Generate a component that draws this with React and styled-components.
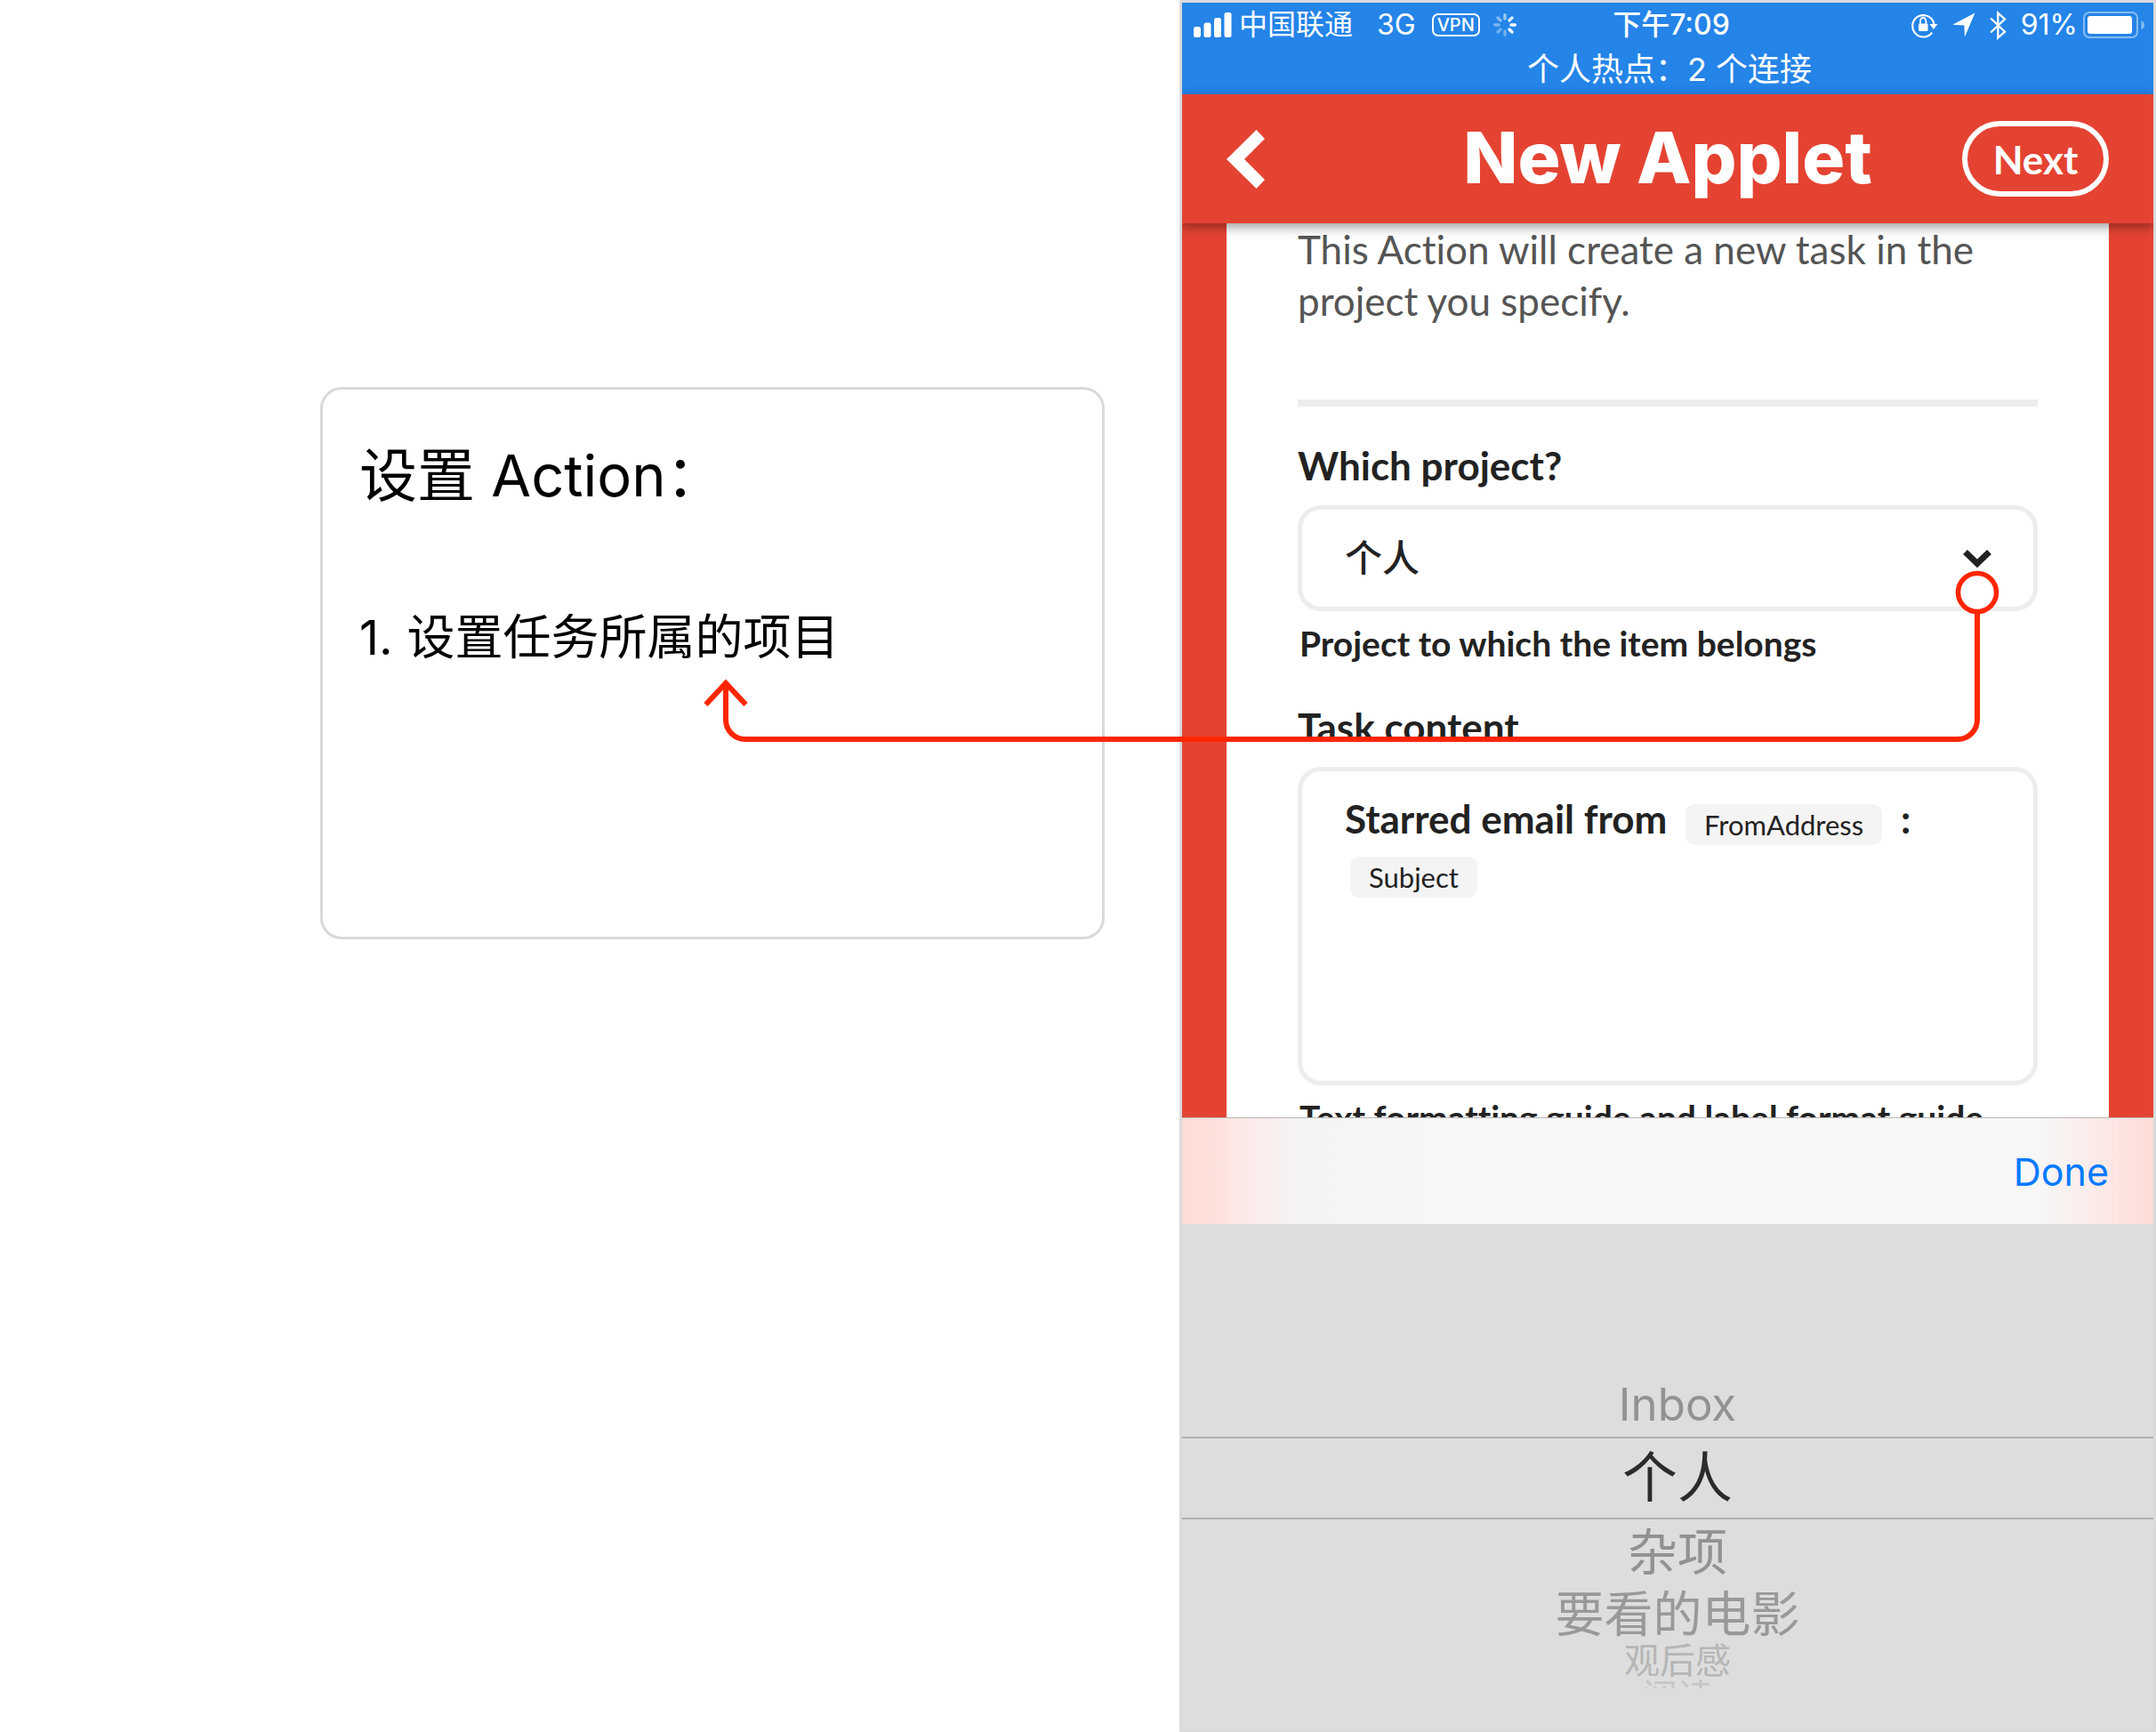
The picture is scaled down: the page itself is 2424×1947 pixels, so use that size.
import React, { useState } from "react";
import styled, { createGlobalStyle } from "styled-components";

const UI = `Inter, "Noto Sans CJK SC", sans-serif`;
const BRAND = `Lato, "Noto Sans CJK SC", sans-serif`;

const GlobalStyle = createGlobalStyle`
  *, *::before, *::after { box-sizing: border-box; }
  body { margin: 0; background: #fff; font-family: ${UI}; }
  h1, h2, p, ol, ul { margin: 0; padding: 0; }
  button, select { font: inherit; color: inherit; border: 0; background: none; padding: 0; margin: 0; }
`;

const Page = styled.main`
  position: relative;
  display: grid;
  grid-template-columns: minmax(0, 1326fr) minmax(0, 1098fr);
  min-height: 100vh;
  overflow: hidden;
`;

const NoteColumn = styled.section`
  display: flex;
  flex-direction: column;
  padding: 435px 84px 0 360px;
`;

const NoteCard = styled.article`
  min-height: 621px;
  padding: 52px 41px;
  border: 3px solid #d9d9d9;
  border-radius: 24px;
  color: #000;
`;

const NoteTitle = styled.h2`
  font-size: 65px;
  line-height: 90px;
  font-weight: 400;
`;

const NoteList = styled.ol`
  margin-top: 99px;
  list-style: none;
  font-size: 54px;
  line-height: 76px;
`;

const NoteItem = styled.li`
  display: flex;
  gap: 16px;
`;

const Phone = styled.section`
  display: flex;
  flex-direction: column;
  overflow: hidden;
  border: 3px solid #d9d9d9;
`;

const StatusBar = styled.div`
  padding: 0 9px 3px 13px;
  background: #2484e8;
  color: #fff;
`;

const StatusRow = styled.div`
  display: grid;
  grid-template-columns: 1fr auto 1fr;
  align-items: center;
  height: 50px;
  font-size: 32px;
  line-height: 50px;
`;

const StatusGroup = styled.div`
  display: flex;
  align-items: center;
  justify-content: ${(p) => (p.$end ? "flex-end" : "flex-start")};
  gap: ${(p) => p.$gap}px;
  white-space: nowrap;
`;

const Time = styled.span`
  padding-left: 4px;
  font-weight: 500;
`;

const VpnBadge = styled.span`
  padding: 0 4px;
  border: 2px solid #fff;
  border-radius: 7px;
  font-size: 20px;
  line-height: 22px;
  font-weight: 500;
`;

const Hotspot = styled.p`
  font-size: 36px;
  line-height: 50px;
  text-align: center;
`;

const Header = styled.header`
  position: relative;
  z-index: 1;
  display: grid;
  grid-template-columns: 165px 1fr 165px;
  align-items: center;
  height: 145px;
  padding: 0 50px;
  background: #e44332;
  color: #fff;
  font-family: ${BRAND};
  box-shadow: 0 4px 12px rgba(0, 0, 0, 0.4);
`;

const BackButton = styled.button`
  display: flex;
  justify-self: start;
`;

const Title = styled.h1`
  padding-bottom: 4px;
  font-family: ${UI};
  font-size: 80px;
  line-height: 94px;
  font-weight: 800;
  text-align: center;
  white-space: nowrap;
`;

const NextButton = styled.button`
  height: 85px;
  border: 6px solid #fff;
  border-radius: 43px;
  font-size: 44px;
  font-weight: 700;
`;

const Backdrop = styled.div`
  height: 1005px;
  padding: 0 50px;
  overflow: hidden;
  background: #e44332;
`;

const Form = styled.form`
  padding: 0 80px;
  background: #fff;
  color: #222;
  font-family: ${BRAND};
  font-size: 44px;
  line-height: 58px;
  font-variant-ligatures: none;
`;

const Intro = styled.p`
  padding-bottom: 82px;
  border-bottom: 8px solid #ededed;
  color: #555;
`;

const Field = styled.div`
  padding-top: ${(p) => p.$top}px;
`;

const Label = styled.label`
  display: block;
  margin-bottom: 16px;
  font-weight: 700;
`;

const SelectBox = styled.div`
  position: relative;
  display: flex;
`;

const Select = styled.select`
  appearance: none;
  width: 100%;
  height: 119px;
  padding: 0 100px 2px 48px;
  border: 5px solid #ededed;
  border-radius: 26px;
  background: #fff;
  font-size: 42px;
  font-weight: 500;
`;

const SelectChevron = styled.svg`
  position: absolute;
  right: 51px;
  top: 49px;
  pointer-events: none;
`;

const Editor = styled.div`
  min-height: 358px;
  padding: 24px 48px;
  border: 5px solid #ededed;
  border-radius: 26px;
  font-weight: 700;
`;

const Chip = styled.span`
  display: inline-block;
  margin: 0 ${(p) => (p.$lead ? 6 : 10)}px;
  padding: 0 21px;
  border-radius: 10px;
  background: #f4f4f4;
  font-size: 31px;
  line-height: 46px;
  font-weight: 400;
  vertical-align: -2px;
`;

const Hint = styled.p`
  padding: 11px 2px 0;
  font-size: 39px;
  line-height: 50px;
  font-weight: 700;
  white-space: nowrap;
`;

const Toolbar = styled.div`
  display: flex;
  align-items: center;
  justify-content: flex-end;
  height: 120px;
  padding: 0 50px;
  border-top: 1px solid #b9b5b5;
  background: linear-gradient(90deg, #ffdbd6 0, #ffdfda 30px, #fbeceb 80px, #f4f4f4 140px, #f7f7f7 300px, #f7f7f7 calc(100% - 130px), #fbecea calc(100% - 70px), #ffdcd7 100%);
`;

const DoneButton = styled.button`
  color: #007aff;
  font-size: 43px;
  line-height: 60px;
`;

const Picker = styled.ul`
  flex: 1;
  padding: 166px 0 40px;
  background: #ddd;
  list-style: none;
`;

const PickerRow = styled.li`
  display: flex;
  justify-content: center;
  align-items: ${(p) => (p.$clipped ? "flex-start" : "center")};
  height: ${(p) => p.$height}px;
  padding-left: 22px;
  overflow: ${(p) => (p.$clipped ? "hidden" : "visible")};
  border: solid #b0b0b0;
  border-width: ${(p) => (p.$selected ? "2px 0" : 0)};
`;

const PickerButton = styled.button`
  flex: none;
  color: ${(p) => p.$color};
  font-size: ${(p) => p.$size}px;
  line-height: 1;
`;

const Connector = styled.svg`
  position: absolute;
  z-index: 2;
  top: 0;
  left: 0;
  width: 100%;
  pointer-events: none;
`;

const SignalIcon = () => (
  <svg width="43" height="28" viewBox="0 0 43 28" fill="#fff" aria-hidden="true">
    <rect x="0" y="16" width="8" height="12" rx="2.5" />
    <rect x="11.5" y="11.5" width="8" height="16.5" rx="2.5" />
    <rect x="23" y="6" width="8" height="22" rx="2.5" />
    <rect x="34.5" y="0" width="8" height="28" rx="2.5" />
  </svg>
);

const SPOKES = [0.55, 0.85, 1, 1, 0.35, 0.35, 0.4, 0.45];

const SpinnerIcon = () => (
  <svg width="26" height="28" viewBox="-13 -14 26 28" stroke="#fff" strokeWidth="3.4" strokeLinecap="round" aria-hidden="true">
    {SPOKES.map((o, i) => (
      <line key={i} y1="-7" y2="-11.3" opacity={o} transform={`rotate(${i * 45})`} />
    ))}
  </svg>
);

const RotationLockIcon = () => (
  <svg width="30" height="30" viewBox="0 0 30 30" fill="none" stroke="#fff" strokeWidth="2.2" aria-hidden="true">
    <path d="M23.2 23.6A12.2 12.2 0 1 1 25.5 14.5" />
    <path d="M20.5 14h9l-4.6 6z" fill="#fff" stroke="none" />
    <rect x="8" y="13.5" width="10.5" height="8.5" rx="1" fill="#fff" stroke="none" />
    <path d="M10 14v-3.2a3.2 3.8 0 0 1 6.4 0V14" strokeWidth="1.8" />
  </svg>
);

const LocationIcon = () => (
  <svg width="26" height="28" viewBox="0 0 26 28" fill="#fff" aria-hidden="true">
    <path d="M25.5 .6 14 27.5l-.6-13L.3 13.8z" />
  </svg>
);

const BluetoothIcon = () => (
  <svg width="19" height="33" viewBox="0 0 19 33" fill="none" stroke="#fff" strokeWidth="2.3" aria-hidden="true">
    <path d="M1.2 8.5 17 23.7 9.3 30.5V2.6L17 9.5 1.2 24.5" />
  </svg>
);

const BatteryIcon = () => (
  <svg width="70" height="30" viewBox="0 0 70 30" aria-hidden="true">
    <rect x="1" y="1" width="60" height="28" rx="6" fill="none" stroke="#fff" strokeWidth="2" opacity=".45" />
    <rect x="5" y="5" width="50" height="20" rx="3" fill="#fff" />
    <path d="M65.5 10c4.6 2 4.6 8.500 0 10.500z" fill="#fff" opacity=".45" />
  </svg>
);

const BackIcon = () => (
  <svg width="43" height="66" viewBox="0 0 43 66" fill="#fff" aria-hidden="true">
    <path d="M33.500 0 43 10 20 33 43 56 33.500 66 0 33z" />
  </svg>
);

const OPTIONS = [
  { name: "Inbox", height: 73, size: 51, color: "#929292" },
  { name: "个人", height: 93, size: 62, color: "#2b2b2b" },
  { name: "杂项", height: 74, size: 56, color: "#929292" },
  { name: "要看的电影", height: 64, size: 55, color: "#999" },
  { name: "观后感", height: 42, size: 40, color: "#b6b6b6" },
  { name: "阅读", height: 10, size: 40, color: "#c6c6c6", clipped: true },
];

export default function App() {
  const [project, setProject] = useState("个人");
  return (
    <>
      <GlobalStyle />
      <Page lang="zh-CN">
        <NoteColumn>
          <NoteCard>
            <NoteTitle>设置 Action：</NoteTitle>
            <NoteList>
              <NoteItem>
                <span>1.</span>
                <span>设置任务所属的项目</span>
              </NoteItem>
            </NoteList>
          </NoteCard>
        </NoteColumn>

        <Phone>
          <StatusBar>
            <StatusRow>
              <StatusGroup $gap={8}>
                <SignalIcon />
                <StatusGroup $gap={15}>
                  <StatusGroup $gap={18}>
                    <span>中国联通&nbsp;</span>
                    <span>3G</span>
                    <VpnBadge>VPN</VpnBadge>
                  </StatusGroup>
                  <SpinnerIcon />
                </StatusGroup>
              </StatusGroup>
              <Time>下午7:09</Time>
              <StatusGroup $end $gap={16}>
                <RotationLockIcon />
                <LocationIcon />
                <BluetoothIcon />
                <StatusGroup $gap={6}>
                  <span>91%</span>
                  <BatteryIcon />
                </StatusGroup>
              </StatusGroup>
            </StatusRow>
            <Hotspot>个人热点：2 个连接</Hotspot>
          </StatusBar>

          <Header>
            <BackButton type="button" aria-label="Back">
              <BackIcon />
            </BackButton>
            <Title>New Applet</Title>
            <NextButton type="button">Next</NextButton>
          </Header>

          <Backdrop>
            <Form lang="en">
              <Intro>This Action will create a new task in the project you specify.</Intro>
              <Field $top={37}>
                <Label htmlFor="project">Which project?</Label>
                <SelectBox>
                  <Select id="project" value={project} onChange={(e) => setProject(e.target.value)}>
                    {OPTIONS.map((o) => (
                      <option key={o.name}>{o.name}</option>
                    ))}
                  </Select>
                  <SelectChevron width="34" height="22" viewBox="0 0 34 22" fill="none" stroke="#222" strokeWidth="7" aria-hidden="true">
                    <path d="M3.500 3.500 17 16.500 30.500 3.500" />
                  </SelectChevron>
                </SelectBox>
                <Hint>Project to which the item belongs</Hint>
              </Field>
              <Field $top={40}>
                <Label as="div" id="content-label">Task content</Label>
                <Editor role="textbox" aria-multiline="true" aria-labelledby="content-label" tabIndex={0}>
                  Starred email from <Chip>FromAddress</Chip> :<br />
                  <Chip $lead>Subject</Chip>
                </Editor>
                <Hint>Text formatting guide and label format guide</Hint>
              </Field>
            </Form>
          </Backdrop>

          <Toolbar>
            <DoneButton type="button">Done</DoneButton>
          </Toolbar>
          <Picker>
            {OPTIONS.map((o) => (
              <PickerRow key={o.name} $height={o.height} $clipped={o.clipped} $selected={o.name === project}>
                <PickerButton type="button" $size={o.size} $color={o.color} onClick={() => setProject(o.name)}>
                  {o.name}
                </PickerButton>
              </PickerRow>
            ))}
          </Picker>
        </Phone>

        <Connector viewBox="0 0 2424 1947" fill="none" stroke="#ff2600" strokeWidth="6" aria-hidden="true">
          <circle cx="2223" cy="666" r="21.500" strokeWidth="5.500" fill="#fff" />
          <path d="M2223 689V809a22 22 0 0 1-22 22H838a22 22 0 0 1-22-22V768" />
          <path d="M793.500 792 816 768l22.500 24" />
        </Connector>
      </Page>
    </>
  );
}
